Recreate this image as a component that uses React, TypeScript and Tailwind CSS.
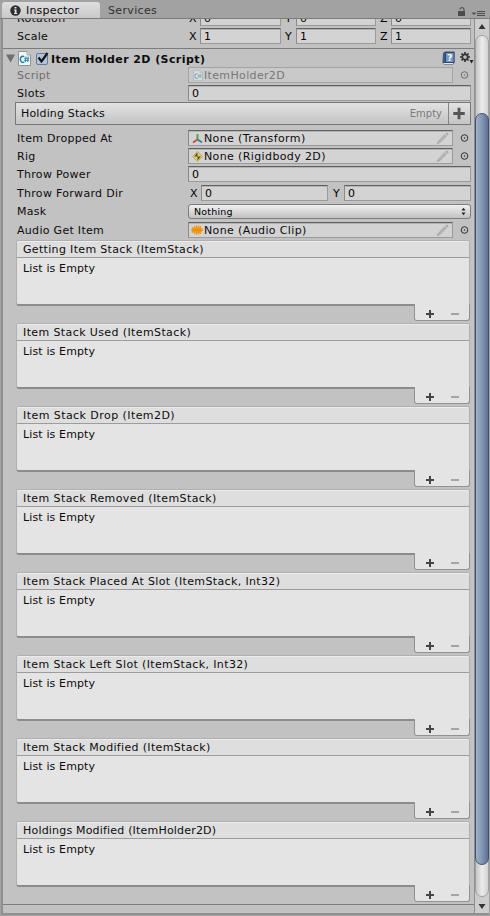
import React from "react";

const BLACK = "text-[#0c0c0c]";

function Field({ className = "", children }: { className?: string; children?: React.ReactNode }) {
  return (
    <div
      className={`flex h-4 items-center border border-[#9a9a9a] border-t-[#606060] border-l-[#8a8a8a] bg-[#d3d3d3] pl-[3px] shadow-[inset_0_1px_0_#b4b4b4] ${className}`}
    >
      {children}
    </div>
  );
}

function Value({ children }: { children: React.ReactNode }) {
  return <span className="pt-0.5 text-black">{children}</span>;
}

function Row({ label, dim, spacing = "tracking-[0.3px]", className = "", children }: { label: string; dim?: boolean; spacing?: string; className?: string; children: React.ReactNode }) {
  return (
    <div className={`flex h-4 items-center pl-[14px] ${className}`}>
      <span className={`w-[171px] shrink-0 pt-0.5 ${spacing} ${dim ? "text-[#6f6f6f]" : BLACK}`}>{label}</span>
      {children}
    </div>
  );
}

function Picker({ dim }: { dim?: boolean }) {
  return (
    <svg className="ml-[6px] shrink-0" width="11" height="11" viewBox="0 0 11 11">
      <circle cx="5.5" cy="5" r="3.3" fill="none" stroke={dim ? "#6e6e6e" : "#303030"} strokeWidth="1" />
      <rect x="4.9" y="4.4" width="1.2" height="1.2" fill={dim ? "#6e6e6e" : "#202020"} />
    </svg>
  );
}

function Pencil() {
  return (
    <svg className="mr-[3px] ml-auto" width="13" height="13" viewBox="0 0 13 13">
      <path d="M.5 12.5 2 9l7-7 2 2-7 7z" fill="#ababab" />
      <path d="m9.6 1.4 1.1-1 2 2-1.1 1z" fill="#a2a2a2" />
      <path d="m3 10 7-7" stroke="#c2c2c2" strokeWidth=".7" />
    </svg>
  );
}

function ObjectRow({ label, value, icon, className }: { label: string; value: string; icon: React.ReactNode; className?: string }) {
  return (
    <Row label={label} className={className}>
      <Field className="w-[265px]">
        <span className="mr-px -ml-px flex w-3 shrink-0 justify-center">{icon}</span>
        <span className={`pt-0.5 ${BLACK} tracking-[0.38px]`}>{value}</span>
        <Pencil />
      </Field>
      <Picker />
    </Row>
  );
}

function Vector3({ value }: { value: string }) {
  return (
    <>
      <span className="w-3 pt-0.5 pl-px">X</span>
      <Field className="w-[81px]"><Value>{value}</Value></Field>
      <span className="w-[15px] pt-0.5 pl-1">Y</span>
      <Field className="w-20"><Value>{value}</Value></Field>
      <span className="w-[15px] pt-0.5 pl-1">Z</span>
      <Field className="w-20"><Value>{value}</Value></Field>
    </>
  );
}

function ScriptIcon({ dim }: { dim?: boolean }) {
  return (
    <svg width={dim ? 10 : 13} height={dim ? 11 : 15} viewBox="0 0 13 15" opacity={dim ? 0.45 : 1}>
      <path d="M.5.5h8.5l3.5 3.5v10.500h-12z" fill="#f2f5f6" stroke="#8d9498" />
      <path d="M9 .5V4h3.500" fill="#cfd6d9" stroke="#8d9498" strokeWidth=".7" />
      <path d="M6.200 5.700C4.800 4.500 2.300 5.500 2.300 8.300s2.400 3.900 4 2.700" fill="none" stroke="#1882a8" strokeWidth="1.500" />
      <path d="M8 5.500 7.300 11M10.300 5.500 9.600 11M6.200 7.300h5M6 9.300h5" stroke="#1882a8" strokeWidth=".9" />
    </svg>
  );
}

const TransformIcon = (
  <svg width="11" height="11" viewBox="0 0 11 11">
    <path d="M5.500 6.500V1" stroke="#57a548" strokeWidth="2" />
    <path d="M5.500 6.500 1 9.500" stroke="#c8503c" strokeWidth="2" />
    <path d="m5.500 6.500 4.500 3" stroke="#3f7fa6" strokeWidth="2" />
  </svg>
);

const RigidbodyIcon = (
  <svg width="11" height="11" viewBox="0 0 11 11">
    <path d="M5.500 .5 10.500 5.500 5.500 10.500 .5 5.500z" fill="#e0cf6a" stroke="#a8923a" strokeWidth=".6" />
    <path d="M5.500 1.500v4H2.200zM5.500 9.500v-4h3.300z" fill="#4b4630" />
  </svg>
);

const AudioIcon = (
  <svg width="12" height="10" viewBox="0 0 12 10">
    <path d="M0 4.200h.8V2h1.400v1h.8V.8h1.200v1h.8V.3h1.200v1.500H7V.5h1.200v1.300H9V1h1v2h1v1.200h1v1.600h-1V7h-1v2H9v-.8h-.8v1.300H7V8.200h-.8v1.500H5V8.200h-.8v1H3V7h-.8v1H.8V5.800H0z" fill="#f39a1c" />
    <path d="M1.500 5h9" stroke="#d4800e" strokeWidth=".8" />
  </svg>
);

const EVENTS = [
  { name: "Getting Item Stack (ItemStack)", spacing: "tracking-[0.33px]" },
  { name: "Item Stack Used (ItemStack)", spacing: "tracking-[0.39px]" },
  { name: "Item Stack Drop (Item2D)", spacing: "tracking-[0.44px]" },
  { name: "Item Stack Removed (ItemStack)", spacing: "tracking-[0.4px]" },
  { name: "Item Stack Placed At Slot (ItemStack, Int32)", spacing: "tracking-[0.36px]" },
  { name: "Item Stack Left Slot (ItemStack, Int32)", spacing: "tracking-[0.37px]" },
  { name: "Item Stack Modified (ItemStack)", spacing: "tracking-[0.34px]" },
  { name: "Holdings Modified (ItemHolder2D)", spacing: "tracking-[0.19px]" },
];

function EventList({ name, spacing }: { name: string; spacing: string }) {
  return (
    <div className={`h-[83px] pr-1 pl-[13px] ${BLACK}`}>
      <div className="h-[66px] rounded-[3px] rounded-br-none border border-[#b0b0b0] border-b-2 border-b-[#8c8c8c] bg-[#e4e4e4]">
        <div className={`flex h-[17px] items-center rounded-t-[2px] border-b border-[#9c9c9c] bg-[#dedede] pl-[6px] shadow-[inset_0_1px_0_#ececec] ${spacing}`}>
          <span className="pt-0.5">{name}</span>
        </div>
        <div className="pt-1 pl-[6px] leading-[14px] tracking-[0.13px]">List is Empty</div>
      </div>
      <div className="relative -mt-[2px] ml-auto flex h-[17px] w-14 rounded-b-[3px] border border-t-0 border-[#929292] bg-[#e4e4e4]">
        <svg width="54" height="16" viewBox="0 0 54 16">
          <path d="M11 10h8M15 6v8" stroke="#454545" strokeWidth="2" />
          <path d="M36 10h8" stroke="#8f8f8f" strokeWidth="1.500" />
        </svg>
      </div>
    </div>
  );
}

function TabBar() {
  return (
    <div className="flex h-[19px] items-end border-b border-[#7b7b7b] bg-[#a2a2a2] pl-[2px]">
      <div className="flex h-4 w-[98px] items-center rounded-t-[3px] bg-gradient-to-b from-[#dedede] to-[#c9c9c9] pl-2">
        <svg width="11" height="11" viewBox="0 0 11 11">
          <circle cx="5.500" cy="5.500" r="5.200" fill="#2d2d2d" />
          <path d="M4.500 2h2v1.500h-2zM4 4.500h2.500V8H7.200v1H4V8h.8V5.500H4z" fill="#e8e8e8" />
        </svg>
        <span className={`ml-[5px] pt-0.5 tracking-[0.2px] ${BLACK}`}>Inspector</span>
      </div>
      <span className="ml-2 h-4 leading-[18px] tracking-[0.35px] text-[#333]">Services</span>
      <svg className="ml-auto mr-[3px]" width="30" height="16" viewBox="0 0 30 16">
        <path d="M1 9h7v5H1z" fill="#4c4c4c" />
        <path d="M7 9V7.500C7 5 3 5 3 7.500" fill="none" stroke="#555" strokeWidth="1.200" />
        <path d="M14.500 10.500h5L17 13z" fill="#4c4c4c" />
        <path d="M20 9.500h8M20 11.500h8M20 13.500h8" stroke="#4c4c4c" />
      </svg>
    </div>
  );
}

function Scrollbar() {
  return (
    <div className="flex w-[15px] flex-col border-l border-[#8f8f8f] bg-[#cdcdcd]">
      <svg width="14" height="16" viewBox="0 0 14 16">
        <path d="M3.500 10 7 5l3.500 5z" fill="#333" />
      </svg>
      <div className="h-[862px] rounded-[7px] border border-[#a0a0a0] bg-gradient-to-r from-[#c4c4c4] via-[#ececec] to-[#d2d2d2] pt-[77px]">
        <div className="-mx-px h-[752px] rounded-[7px] border border-[#40506b] bg-gradient-to-r from-[#a0b0c8] via-[#8295b5] to-[#5d7194]" />
      </div>
      <svg width="14" height="16" viewBox="0 0 14 16">
        <path d="M3.500 7h7L7 12z" fill="#333" />
      </svg>
    </div>
  );
}

export default function App() {
  return (
    <div className="flex h-[916px] w-[490px] flex-col overflow-hidden bg-[#a2a2a2] font-['DejaVu_Sans',sans-serif] text-[11px] leading-4 tracking-[0.4px] whitespace-nowrap">
      <TabBar />
      <div className="mr-px ml-px flex h-[896px] border-b-2 border-l-2 border-[#909090] bg-[#c2c2c2]">
        <div className="h-[894px] w-[471px] overflow-hidden">
          <Row label="Rotation" className="-mt-[9px]">
            <Vector3 value="0" />
          </Row>
          <Row label="Scale" className="mt-[2px]">
            <Vector3 value="1" />
          </Row>
          <div className="mt-1 flex h-[19px] items-center border-t border-[#7c7c7c]">
            <svg className="mt-px ml-[3px]" width="9" height="9" viewBox="0 0 9 9">
              <path d="M0 .5h9l-4.500 8z" fill="#6f6f6f" />
            </svg>
            <span className="mt-px ml-[3px]"><ScriptIcon /></span>
            <svg className="ml-[5px]" width="13" height="13" viewBox="0 0 13 13">
              <rect x=".5" y="1.500" width="11" height="11" rx="1.500" fill="#b0c3df" stroke="#687b98" />
              <path d="m2.500 5.500 3 4L11.500 1" fill="none" stroke="#151515" strokeWidth="2.200" />
            </svg>
            <span className={`ml-[2px] pt-[3px] font-bold tracking-[0.42px] ${BLACK}`}>Item Holder 2D (Script)</span>
            <svg className="ml-auto" width="13" height="14" viewBox="0 0 13 14">
              <path d="M1 2 3 .5h9.500v11L11 13.500H2L.5 12z" fill="#395a87" />
              <path d="M3.500 1.500h8.500v10H3.500z" fill="#7797c0" stroke="#223c60" strokeWidth=".8" />
              <path d="M1.500 12.500h9.500" stroke="#e4e9f0" />
              <text x="5.200" y="10" fontSize="9" fontWeight="700" fill="#fff" letterSpacing="0">?</text>
            </svg>
            <svg className="ml-[5px]" width="14" height="14" viewBox="0 0 14 14">
              <circle cx="5" cy="6" r="2.700" fill="none" stroke="#333" strokeWidth="1.700" />
              <path d="M5 1v2M5 9v2M0 6h2M8 6h2M1.500 2.500l1.300 1.300M7.200 8.200l1.300 1.300M8.500 2.500 7.200 3.800M2.800 8.200 1.500 9.500" stroke="#333" strokeWidth="1.700" />
              <path d="M9.500 9h4l-2 3.500z" fill="#222" />
            </svg>
          </div>
          <Row label="Script" dim>
            <Field className="w-[265px] !border-[#a4a4a4] !bg-[#c9c9c9] !shadow-none">
              <span className="mr-px flex w-[11px] justify-center"><ScriptIcon dim /></span>
              <span className="pt-0.5 tracking-[0.35px] text-[#777]">ItemHolder2D</span>
            </Field>
            <Picker dim />
          </Row>
          <Row label="Slots" className="mt-[2px]">
            <Field className="w-[283px]"><Value>0</Value></Field>
          </Row>
          <div className={`mt-px mr-[3px] ml-3 flex h-[23px] items-center border border-[#777] bg-gradient-to-b from-[#e2e2e2] to-[#c4c4c4] pl-[5px] ${BLACK}`}>
            <span className="tracking-[0.15px]">Holding Stacks</span>
            <span className="ml-auto mr-[6px] pt-px text-[10px] tracking-[0px] text-[#7b7b7b]">Empty</span>
            <svg className="border-l border-[#858585]" width="22" height="21" viewBox="0 0 22 21">
              <path d="M4.500 10.500h12M10.500 4.500v12" stroke="#555" strokeWidth="3" />
            </svg>
          </div>
          <ObjectRow label="Item Dropped At" value="None (Transform)" icon={TransformIcon} className="mt-[5px]" />
          <ObjectRow label="Rig" value="None (Rigidbody 2D)" icon={RigidbodyIcon} className="mt-[2px]" />
          <Row label="Throw Power" className="mt-[2px]">
            <Field className="w-[283px]"><Value>0</Value></Field>
          </Row>
          <Row label="Throw Forward Dir" className="mt-[3px]">
            <span className="w-[13px] pt-0.5 pl-[2px]">X</span>
            <Field className="w-[127px]"><Value>0</Value></Field>
            <span className="w-4 pt-0.5 pl-[5px]">Y</span>
            <Field className="w-[127px]"><Value>0</Value></Field>
          </Row>
          <Row label="Mask" className="mt-[2px]">
            <div className="flex h-[15px] w-[283px] items-center rounded-[3px] border border-[#7d7d7d] bg-gradient-to-b from-[#f0f0f0] to-[#c2c2c2] pl-[5px]">
              <span className="pt-px text-[9.500px] tracking-[0.2px] text-black">Nothing</span>
              <svg className="mr-1 ml-auto" width="5" height="9" viewBox="0 0 5 9">
                <path d="M.5 3.500 2.500.8l2 2.700zM.5 5.500h4l-2 2.700z" fill="#222" />
              </svg>
            </div>
          </Row>
          <ObjectRow label="Audio Get Item" value="None (Audio Clip)" icon={AudioIcon} className="mt-[3px] mb-[2px]" />
          {EVENTS.map((e) => (
            <EventList key={e.name} name={e.name} spacing={e.spacing} />
          ))}
          <div className="border-t border-[#7c7c7c]" />
        </div>
        <Scrollbar />
      </div>
    </div>
  );
}
